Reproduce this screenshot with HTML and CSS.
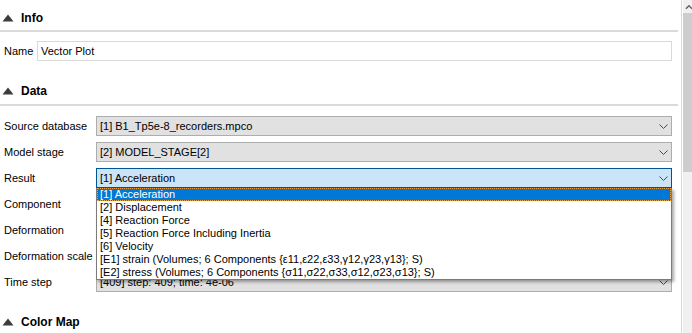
FILE: index.html
```html
<!DOCTYPE html>
<html>
<head>
<meta charset="utf-8">
<link rel="stylesheet" href="styles.css">
</head>
<body>
<div class="window">
  <div class="panel">
    <div class="section-header">
      <svg class="tri" width="12" height="8" viewBox="0 0 12 8"><polygon points="6,0.5 11.5,7.5 0.5,7.5" fill="#3c3c3c"/></svg>
      <span>Info</span>
    </div>
    <div class="name-row">
      <span class="name-label">Name</span>
      <div class="textbox">Vector Plot</div>
    </div>
    <div class="section-header gap-top">
      <svg class="tri" width="12" height="8" viewBox="0 0 12 8"><polygon points="6,0.5 11.5,7.5 0.5,7.5" fill="#3c3c3c"/></svg>
      <span>Data</span>
    </div>
    <div class="form">
      <div class="label">Source database</div>
      <div class="combo"><span>[1] B1_Tp5e-8_recorders.mpco</span><svg class="chev" width="9" height="5" viewBox="0 0 9 5"><polyline points="0.5,0.5 4.5,4.5 8.5,0.5" fill="none" stroke="#4a4a4a" stroke-width="1"/></svg></div>

      <div class="label">Model stage</div>
      <div class="combo"><span>[2] MODEL_STAGE[2]</span><svg class="chev" width="9" height="5" viewBox="0 0 9 5"><polyline points="0.5,0.5 4.5,4.5 8.5,0.5" fill="none" stroke="#4a4a4a" stroke-width="1"/></svg></div>

      <div class="label">Result</div>
      <div class="combo active"><span>[1] Acceleration</span><svg class="chev" width="9" height="5" viewBox="0 0 9 5"><polyline points="0.5,0.5 4.5,4.5 8.5,0.5" fill="none" stroke="#4a4a4a" stroke-width="1"/></svg>
        <ul class="popup">
          <li class="sel">[1] Acceleration</li>
          <li>[2] Displacement</li>
          <li>[4] Reaction Force</li>
          <li>[5] Reaction Force Including Inertia</li>
          <li>[6] Velocity</li>
          <li>[E1] strain (Volumes; 6 Components {ε11,ε22,ε33,γ12,γ23,γ13}; S)</li>
          <li>[E2] stress (Volumes; 6 Components {σ11,σ22,σ33,σ12,σ23,σ13}; S)</li>
        </ul>
      </div>

      <div class="label">Component</div>
      <div class="combo"><span></span></div>

      <div class="label">Deformation</div>
      <div class="combo"><span></span></div>

      <div class="label">Deformation scale</div>
      <div class="combo"><span></span></div>

      <div class="label">Time step</div>
      <div class="combo"><span>[409] step: 409; time: 4e-06</span><svg class="chev" width="9" height="5" viewBox="0 0 9 5"><polyline points="0.5,0.5 4.5,4.5 8.5,0.5" fill="none" stroke="#4a4a4a" stroke-width="1"/></svg></div>
    </div>
    <div class="section-header cmap">
      <svg class="tri" width="12" height="8" viewBox="0 0 12 8"><polygon points="6,0.5 11.5,7.5 0.5,7.5" fill="#3c3c3c"/></svg>
      <span>Color Map</span>
    </div>
  </div>
  <div class="scrollbar">
    <div class="sb-arrow"><svg width="9" height="6" viewBox="0 0 9 6"><polyline points="1,5 4.5,1.5 8,5" fill="none" stroke="#606060" stroke-width="1.6"/></svg></div>
    <div class="sb-thumb"></div>
  </div>
</div>
</body>
</html>
```
FILE: styles.css
```css
html, body {
  margin: 0;
  padding: 0;
  background: #ffffff;
}
body {
  font-family: "Liberation Sans", Arial, sans-serif;
  font-size: 11px;
  color: #000;
  overflow: hidden;
}
.window {
  display: flex;
  width: 692px;
  height: 333px;
  overflow: hidden;
}
.panel {
  width: 681px;
  flex: none;
}
.section-header {
  display: flex;
  align-items: center;
  gap: 7px;
  height: 32px;
  box-sizing: border-box;
  padding: 5px 0 0 2px;
  margin-right: 3px;
  border-bottom: 2px solid #dadada;
  font-weight: bold;
  font-size: 12px;
}
.section-header.gap-top {
  margin-top: 16px;
  padding-top: 1px;
  height: 29px;
}
.section-header.cmap {
  margin-top: 16px;
  padding-top: 1px;
  height: 29px;
}
.tri { display: block; }
.name-row {
  display: flex;
  align-items: center;
  padding: 9px 9px 0 4px;
}
.name-label {
  width: 33px;
  flex: none;
}
.textbox {
  flex: 1;
  height: 20px;
  box-sizing: border-box;
  border: 1px solid #d9d9d9;
  padding-left: 3px;
  line-height: 18px;
}
.form {
  display: grid;
  grid-template-columns: 92px 1fr;
  row-gap: 6px;
  padding: 10px 9px 0 4px;
}
.label {
  height: 20px;
  line-height: 20px;
  white-space: nowrap;
}
.combo {
  position: relative;
  display: flex;
  align-items: center;
  justify-content: space-between;
  height: 20px;
  box-sizing: border-box;
  border: 1px solid #adadad;
  background: #e1e1e1;
  padding: 0 3px 0 3px;
}
.combo.active {
  background: #cce4f7;
  border-color: #005499;
}
.chev { display: block; margin-right: 0; }
.popup {
  position: absolute;
  top: 19px;
  left: -1px;
  right: -1px;
  margin: 0;
  padding: 0;
  list-style: none;
  background: #fff;
  border: 1px solid #7a7a7a;
  border-top: none;
  box-shadow: 2px 2px 3px rgba(0, 0, 0, 0.35);
  z-index: 5;
}
.popup li {
  height: 13px;
  line-height: 13px;
  padding-left: 3px;
  white-space: nowrap;
}
.popup li.sel {
  background: #0078d7;
  color: #fff;
  outline: 1px dotted #f0a040;
  outline-offset: -1px;
}
.scrollbar {
  flex: none;
  width: 10px;
  border-left: 1px solid #dadada;
  margin-left: 0;
  background: #f0f0f0;
  display: flex;
  flex-direction: column;
  padding-left: 1px;
  background-clip: content-box;
}
.sb-arrow {
  height: 13px;
  display: flex;
  align-items: flex-start;
  padding: 4px 0 0 2px;
  box-sizing: border-box;
  background: #f0f0f0;
}
.sb-thumb {
  height: 159px;
  background: #cdcdcd;
}
```
